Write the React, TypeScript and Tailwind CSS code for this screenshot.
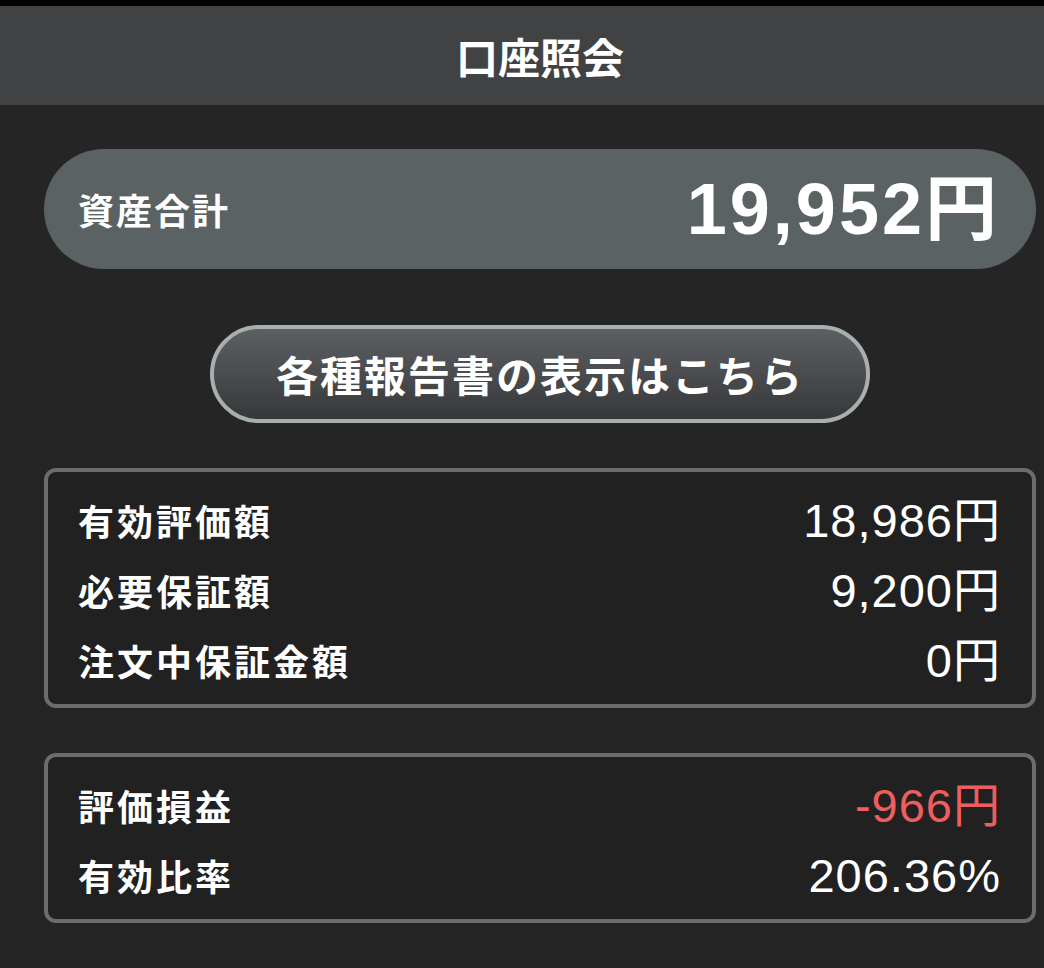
import React from "react";

type Row = {
  label: string;
  value: string;
  negative?: boolean;
};

const marginRows: Row[] = [
  { label: "有効評価額", value: "18,986円" },
  { label: "必要保証額", value: "9,200円" },
  { label: "注文中保証金額", value: "0円" },
];

const profitRows: Row[] = [
  { label: "評価損益", value: "-966円", negative: true },
  { label: "有効比率", value: "206.36%" },
];

const jpFont = {
  fontFamily: '"Noto Sans CJK JP", "Noto Sans", sans-serif',
};
const numFont = {
  fontFamily: '"Liberation Sans", "Noto Sans CJK JP", sans-serif',
};

function InfoBox({ rows }: { rows: Row[] }) {
  return (
    <div className="rounded-[12px] border-4 border-[#6b6c6e] bg-[#212121] pl-[30px] pr-[31px] pt-[13px] pb-[9px]">
      {rows.map((row) => (
        <div key={row.label} className="flex h-[70px] items-center justify-between">
          <span
            className="text-[36px] font-bold leading-none tracking-[3px] text-white"
            style={jpFont}
          >
            {row.label}
          </span>
          <span
            className={
              row.negative
                ? "text-[47px] leading-none tracking-[1px] text-[#ef5e5e]"
                : "text-[47px] leading-none tracking-[1px] text-white"
            }
            style={numFont}
          >
            {row.value}
          </span>
        </div>
      ))}
    </div>
  );
}

export default function App() {
  return (
    <div className="min-h-[968px] w-[1044px] bg-[#252525]">
      <div className="h-[6px] bg-black" />
      <div className="flex h-[99px] items-center justify-center bg-[#414244] pl-[36px]">
        <h1
          className="text-[42px] font-bold leading-none text-white"
          style={jpFont}
        >
          口座照会
        </h1>
      </div>

      <div className="flex flex-col pl-[44px] pr-[8px] pt-[44px]">
        <div className="flex h-[120px] items-center justify-between rounded-full bg-[#5b6264] pl-[34px] pr-[36px]">
          <span
            className="text-[36px] font-bold leading-none tracking-[2px] text-white"
            style={jpFont}
          >
            資産合計
          </span>
          <span
            className="text-[72px] font-bold leading-none tracking-[3px] text-white"
            style={numFont}
          >
            19,952円
          </span>
        </div>

        <div className="mt-[56px] flex justify-center">
          <button
            type="button"
            className="flex h-[98px] w-[660px] items-center justify-center rounded-full border-4 border-[#a9afaf] bg-gradient-to-b from-[#5d6063] to-[#37383a]"
          >
            <span
              className="text-[42px] font-bold leading-none tracking-[2px] text-white"
              style={jpFont}
            >
              各種報告書の表示はこちら
            </span>
          </button>
        </div>

        <div className="mt-[45px]">
          <InfoBox rows={marginRows} />
        </div>
        <div className="mt-[45px]">
          <InfoBox rows={profitRows} />
        </div>
      </div>
    </div>
  );
}
